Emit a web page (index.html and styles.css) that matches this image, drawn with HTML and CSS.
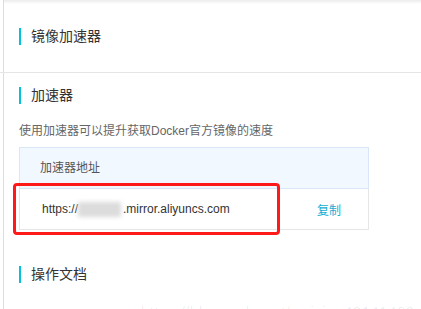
FILE: index.html
```html
<!DOCTYPE html>
<html lang="zh-CN">
<head>
    <meta charset="UTF-8">
    <meta name="viewport" content="width=device-width, initial-scale=1.0">
    <title>镜像加速器</title>
    <link rel="stylesheet" href="styles.css">
</head>
<body>
    <div class="page">
        <div class="section first">
            <div class="title">镜像加速器</div>
        </div>
        <div class="section">
            <div class="title">加速器</div>
            <p class="desc">使用加速器可以提升获取Docker官方镜像的速度</p>
            <div class="table">
                <div class="table-head">加速器地址</div>
                <div class="table-row">
                    <span class="url">https://<span class="blur"></span>.mirror.aliyuncs.com</span>
                    <a class="copy">复制</a>
                </div>
            </div>
        </div>
        <div class="section last">
            <div class="title">操作文档</div>
        </div>
        <div class="mark"></div>
        <div class="watermark">https://blog.csdn.net/weixin_43141460</div>
    </div>
</body>
</html>
```

FILE: styles.css
```css
html, body {
    margin: 0;
    padding: 0;
    background: #ffffff;
}

body {
    font-family: 'Liberation Sans', 'Noto Sans CJK SC', sans-serif;
    color: #333333;
    overflow: hidden;
    height: 309px;
}

.page {
    position: relative;
    margin-left: 3px;
    border-left: 1px solid #dddddd;
    height: 309px;
    background: linear-gradient(#ececec, #ffffff 4px);
}

.section {
    padding: 14px 0 0 15px;
}

.section.first {
    padding-top: 28px;
    padding-bottom: 27px;
    border-bottom: 1px solid #e5e5e5;
    margin-left: -4px;
    padding-left: 19px;
}

.section.last {
    padding-top: 36px;
}

.title {
    font-size: 14px;
    line-height: 17px;
    height: 17px;
    padding-left: 10px;
    border-left: 2px solid #00c1de;
}

.desc {
    margin: 18px 0 0;
    font-size: 12px;
    line-height: 18px;
    color: #666666;
}

.table {
    margin-top: 7px;
    width: 350px;
    box-sizing: border-box;
    border: 1px solid #e6e6e6;
    border-top-color: #d8e7f7;
}

.table-head {
    height: 40px;
    line-height: 40px;
    padding-left: 20px;
    font-size: 12px;
    color: #555555;
    background: #f2f8ff;
    border-bottom: 1px solid #d8e7f7;
    margin: 0 -1px;
    border-left: 1px solid #d8e7f7;
    border-right: 1px solid #d8e7f7;
}

.table-row {
    display: flex;
    justify-content: space-between;
    align-items: center;
    height: 40px;
    padding: 0 27px 0 22px;
    font-size: 12px;
}

.url {
    color: #333333;
    display: flex;
    align-items: center;
}

.blur {
    display: inline-block;
    width: 43px;
    height: 15px;
    margin: 0 2px 0 0;
    background: #dcdcdc;
    filter: blur(2px);
}

.copy {
    color: #13aed4;
    cursor: pointer;
}

.mark {
    position: absolute;
    left: 9px;
    top: 183px;
    width: 261px;
    height: 46px;
    border: 3px solid #ff1a1a;
    border-radius: 4px;
}

.watermark {
    position: absolute;
    left: 137px;
    top: 304px;
    font-size: 15px;
    line-height: 15px;
    color: rgba(0, 0, 0, 0.08);
    white-space: nowrap;
    letter-spacing: 0.5px;
}
```
